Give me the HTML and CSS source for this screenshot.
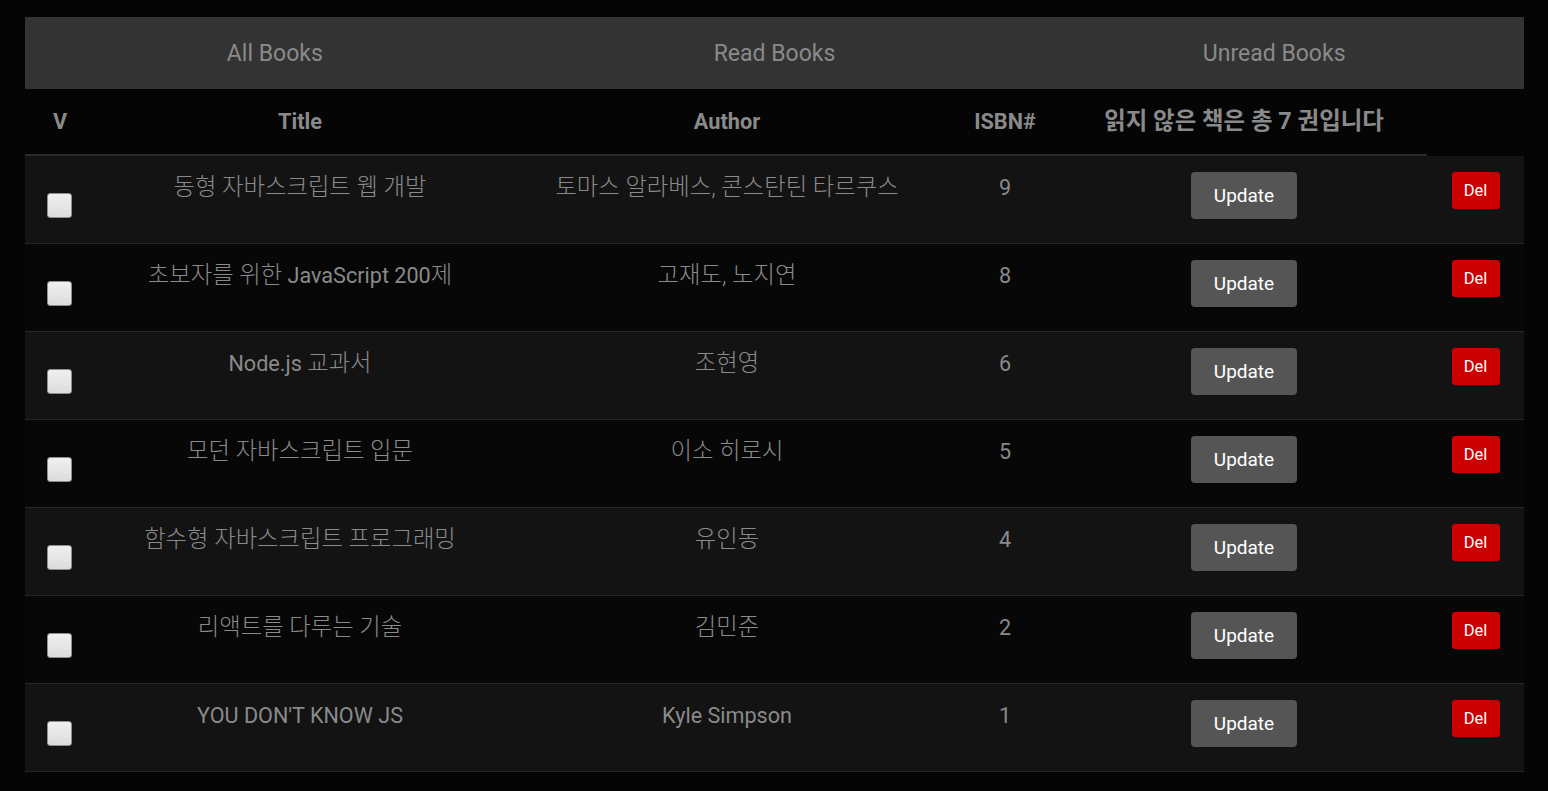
FILE: index.html
```html
<!DOCTYPE html>
<html lang="ko">
<head>
<meta charset="utf-8">
<title>Books</title>
<link rel="stylesheet" href="styles.css">
</head>
<body>
<div class="app">
  <nav class="tabs">
    <a class="tab">All Books</a>
    <a class="tab">Read Books</a>
    <a class="tab">Unread Books</a>
  </nav>
  <table class="books">
    <colgroup>
      <col class="c-check">
      <col class="c-title">
      <col class="c-author">
      <col class="c-isbn">
      <col class="c-update">
      <col class="c-del">
    </colgroup>
    <thead>
      <tr>
        <th>V</th>
        <th>Title</th>
        <th>Author</th>
        <th>ISBN#</th>
        <th><span class="ko">읽지 않은 책은 총 7 권입니다</span></th>
      </tr>
    </thead>
    <tbody>
      <tr>
        <td><input type="checkbox" class="check"></td>
        <td><span class="ko">동형 자바스크립트 웹 개발</span></td>
        <td><span class="ko">토마스 알라베스, 콘스탄틴 타르쿠스</span></td>
        <td>9</td>
        <td><button class="btn-update">Update</button></td>
        <td><button class="btn-del">Del</button></td>
      </tr>
      <tr>
        <td><input type="checkbox" class="check"></td>
        <td><span class="ko">초보자를 위한</span> JavaScript 200<span class="ko">제</span></td>
        <td><span class="ko">고재도, 노지연</span></td>
        <td>8</td>
        <td><button class="btn-update">Update</button></td>
        <td><button class="btn-del">Del</button></td>
      </tr>
      <tr>
        <td><input type="checkbox" class="check"></td>
        <td>Node.js <span class="ko">교과서</span></td>
        <td><span class="ko">조현영</span></td>
        <td>6</td>
        <td><button class="btn-update">Update</button></td>
        <td><button class="btn-del">Del</button></td>
      </tr>
      <tr>
        <td><input type="checkbox" class="check"></td>
        <td><span class="ko">모던 자바스크립트 입문</span></td>
        <td><span class="ko">이소 히로시</span></td>
        <td>5</td>
        <td><button class="btn-update">Update</button></td>
        <td><button class="btn-del">Del</button></td>
      </tr>
      <tr>
        <td><input type="checkbox" class="check"></td>
        <td><span class="ko">함수형 자바스크립트 프로그래밍</span></td>
        <td><span class="ko">유인동</span></td>
        <td>4</td>
        <td><button class="btn-update">Update</button></td>
        <td><button class="btn-del">Del</button></td>
      </tr>
      <tr>
        <td><input type="checkbox" class="check"></td>
        <td><span class="ko">리액트를 다루는 기술</span></td>
        <td><span class="ko">김민준</span></td>
        <td>2</td>
        <td><button class="btn-update">Update</button></td>
        <td><button class="btn-del">Del</button></td>
      </tr>
      <tr>
        <td><input type="checkbox" class="check"></td>
        <td>YOU DON'T KNOW JS</td>
        <td>Kyle Simpson</td>
        <td>1</td>
        <td><button class="btn-update">Update</button></td>
        <td><button class="btn-del">Del</button></td>
      </tr>
    </tbody>
  </table>
</div>
</body>
</html>
```
FILE: styles.css
```css
html, body {
  margin: 0;
  padding: 0;
  background: #050505;
}

body {
  font-family: Roboto, "Noto Sans CJK KR", sans-serif;
  color: #8a8a8a;
}

.app {
  padding: 17px 24px 0 25px;
}

.tabs {
  display: flex;
  height: 72px;
  background: #333333;
}

.tab {
  flex: 1 1 0;
  display: flex;
  align-items: center;
  justify-content: center;
  font-size: 23px;
  color: #8a8a8a;
  cursor: pointer;
}

.books {
  width: 100%;
  table-layout: fixed;
  border-collapse: separate;
  border-spacing: 0;
}

.c-check { width: 70px; }
.c-title { width: 410px; }
.c-author { width: 444px; }
.c-isbn { width: 112px; }
.c-update { width: 366px; }
.c-del { width: 97px; }

.books thead tr {
  height: 67px;
}

.books th {
  padding: 0;
  font-size: 21.7px;
  font-weight: 700;
  color: #8a8a8a;
  text-align: center;
  vertical-align: middle;
  border-bottom: 2px solid #2b2b2b;
}

.books tbody tr {
  height: 88px;
}

.books tbody tr:nth-child(odd) {
  background: #131313;
}

.books tbody tr:nth-child(even) {
  background: #070707;
}

.books td {
  padding: 16px 0 0;
  font-size: 21.6px;
  line-height: 32px;
  color: #8a8a8a;
  text-align: center;
  vertical-align: top;
  border-bottom: 1px solid #262626;
}

.ko {
  font-size: 1.08em;
  line-height: 1;
}

.books td .ko {
  font-weight: 300;
}

.check {
  appearance: none;
  -webkit-appearance: none;
  display: block;
  width: 25px;
  height: 25px;
  margin: 21px 0 0 22px;
  box-sizing: border-box;
  border: 1px solid #8f8f8f;
  border-radius: 3px;
  background: linear-gradient(#f0f0f0, #dcdcdc);
}

.btn-update {
  display: inline-block;
  vertical-align: top;
  width: 106px;
  height: 47px;
  border: none;
  border-radius: 4px;
  background: #555555;
  color: #ffffff;
  font-family: Roboto, sans-serif;
  font-size: 19px;
  padding: 0;
  cursor: pointer;
}

.btn-del {
  display: inline-block;
  vertical-align: top;
  width: 48px;
  height: 37px;
  border: none;
  border-radius: 3px;
  background: #cc0000;
  color: #ffffff;
  font-family: Roboto, sans-serif;
  font-size: 16.5px;
  padding: 0;
  cursor: pointer;
}
```
